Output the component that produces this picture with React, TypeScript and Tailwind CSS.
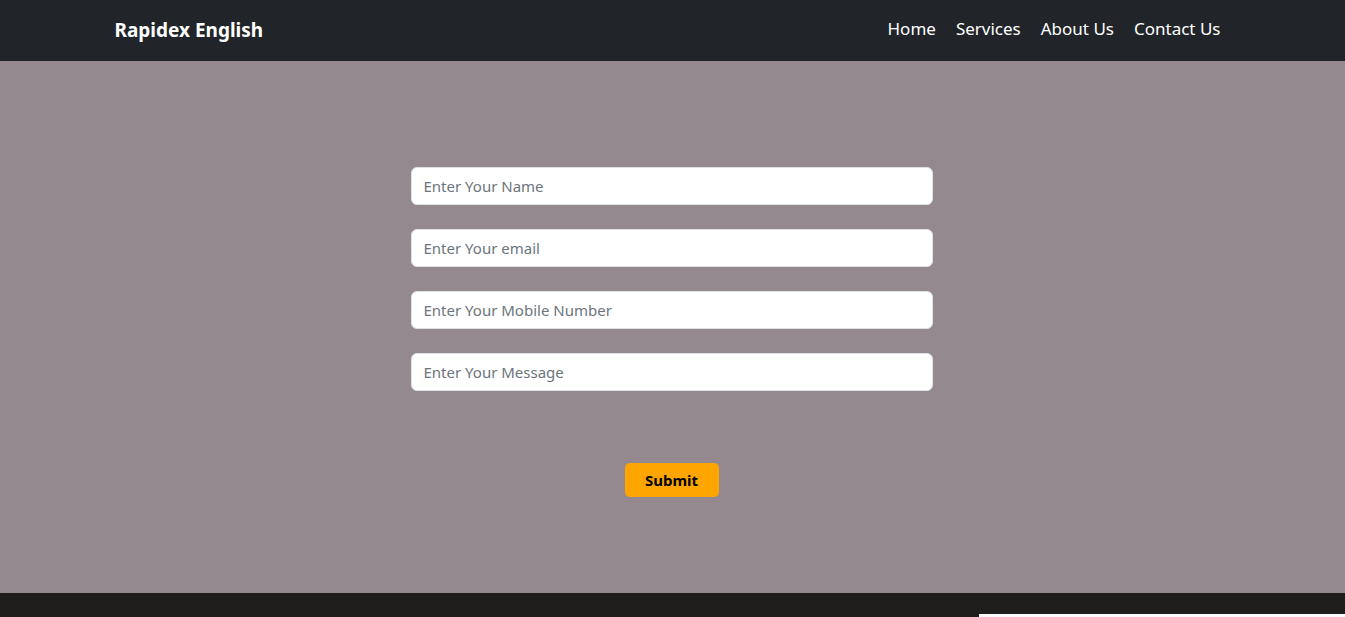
import React from "react";

const font = { fontFamily: '"Noto Sans", "Open Sans", sans-serif' };

const links = ["Home", "Services", "About Us", "Contact Us"];

const fields = [
  { type: "text", placeholder: "Enter Your Name" },
  { type: "email", placeholder: "Enter Your email" },
  { type: "text", placeholder: "Enter Your Mobile Number" },
  { type: "text", placeholder: "Enter Your Message" },
];

export default function App() {
  return (
    <div className="min-h-screen" style={font}>
      {/* Navbar */}
      <nav className="h-[61px] bg-[#212529]">
        <div className="mx-auto flex h-full max-w-[1140px] items-center justify-between px-3">
          <a className="text-[19px] font-bold text-white">Rapidex English</a>
          <ul className="flex items-center pb-[3px]">
            {links.map((l) => (
              <li key={l}>
                <a className="px-[10px] text-[17px] text-white">{l}</a>
              </li>
            ))}
          </ul>
        </div>
      </nav>

      {/* Contact form */}
      <section className="bg-[#958990] pb-[96px] pt-[106px]">
        <form className="mx-auto flex w-[522px] -translate-x-px flex-col">
          <div className="flex flex-col gap-[24px]">
            {fields.map((f) => (
              <input
                key={f.placeholder}
                type={f.type}
                placeholder={f.placeholder}
                className="h-[38px] w-full rounded-[6px] border border-[#dee2e6] bg-white px-3 text-[15px] text-[#212529] outline-none placeholder:text-[#6c757d]"
              />
            ))}
          </div>
          <div className="mt-[72px] flex justify-center">
            <button
              type="button"
              className="h-[34px] w-[94px] rounded-[5px] bg-[#ffa500] text-[15px] font-bold text-black"
            >
              Submit
            </button>
          </div>
        </form>
      </section>

      {/* Footer */}
      <footer className="bg-[#1f1e1c] pt-[21px]">
        <div className="flex justify-end">
          <div className="h-[40px] w-[366px] bg-[#f8f9fa]" />
        </div>
      </footer>
    </div>
  );
}
